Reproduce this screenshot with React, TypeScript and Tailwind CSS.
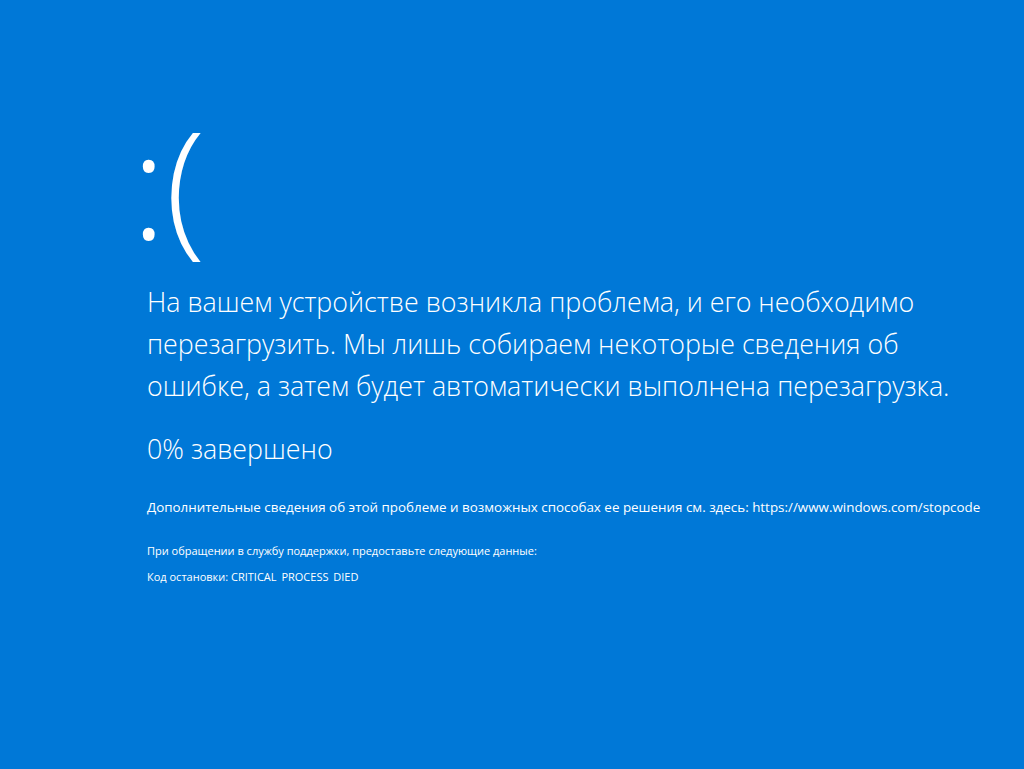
export default function App() {
  return (
    <div
      className="w-[1024px] h-[769px] bg-[#0078d7] text-white overflow-hidden"
      style={{ fontFamily: '"Open Sans", "Noto Sans", sans-serif' }}
    >
      <div className="pl-[147px] pt-[92px] flex flex-col">
        <div className="ml-[-16px] text-[148px] leading-[180px] font-[350] tracking-[-1px] h-[180px] whitespace-nowrap">:(</div>
        <p className="mt-[9px] text-[26.8px] leading-[42px] font-light whitespace-nowrap">
          На вашем устройстве возникла проблема, и его необходимо
          <br />
          перезагрузить. Мы лишь собираем некоторые сведения об
          <br />
          ошибке, а затем будет автоматически выполнена перезагрузка.
        </p>
        <p className="mt-[21px] text-[26.8px] leading-[42px] font-light">0% завершено</p>
        <p className="mt-[28px] text-[13.4px] leading-[18px] whitespace-nowrap">
          Дополнительные сведения об этой проблеме и возможных способах ее решения см. здесь: https://www.windows.com/stopcode
        </p>
        <p className="mt-[28px] text-[11px] leading-[14px]">
          При обращении в службу поддержки, предоставьте следующие данные:
        </p>
        <p className="mt-[12px] text-[11px] leading-[14px]">
          Код остановки: CRITICAL<span className="text-transparent">_</span>PROCESS<span className="text-transparent">_</span>DIED
        </p>
      </div>
    </div>
  );
}
